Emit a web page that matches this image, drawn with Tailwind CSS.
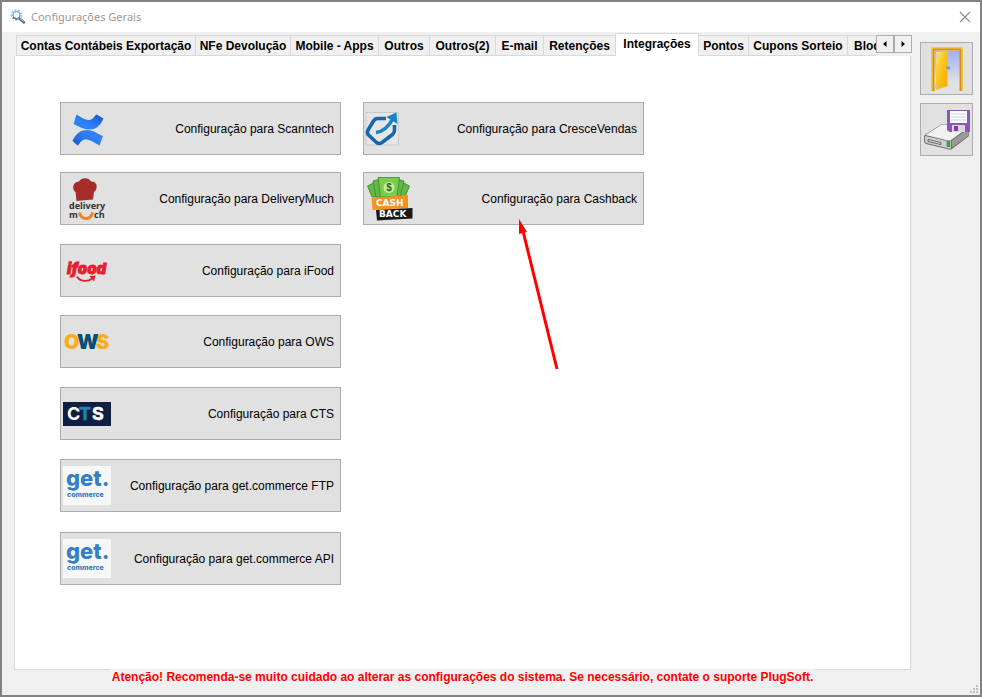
<!DOCTYPE html>
<html lang="pt-BR">
<head>
  <meta charset="UTF-8" />
  <meta name="viewport" content="width=device-width, initial-scale=1" />
  <title>Configurações Gerais</title>
  <script src="https://cdn.jsdelivr.net/npm/@tailwindcss/browser@4"></script>
</head>
<body class="min-h-screen flex flex-col bg-[#f0f0f0] border-2 border-[#828282] font-['Liberation_Sans',Arial,sans-serif] text-[12px] leading-4 text-black">

  <!-- Title bar -->
  <header class="flex items-center h-[30px] bg-white pl-2 pr-[7px]">
    <svg class="w-4 h-4 shrink-0" viewBox="0 0 16 16" fill="none">
      <circle cx="6.5" cy="6" r="4.5" stroke="#a9c6dc" stroke-width="2.6" stroke-dasharray="2 1.1" />
      <circle cx="6.5" cy="6" r="3.5" fill="#f3faff" stroke="#6f9cc0" stroke-width="1" />
      <path d="M3 8.500l4.500 2" stroke="#35618c" stroke-width="1.200" />
      <path d="M9.500 9.500l4.500 4" stroke="#44698f" stroke-width="2.400" stroke-linecap="round" />
      <path d="M10 9.500l3.500 3" stroke="#b9d3ea" stroke-width="1" />
    </svg>
    <h1 class="ml-[5px] flex-1 font-['Noto_Sans',sans-serif] text-[11px] text-[#999999]">Configurações Gerais</h1>
    <button aria-label="Fechar" class="w-4 h-4 flex items-center justify-center">
      <svg class="w-3 h-3" viewBox="0 0 12 12" stroke="#8c8c8c" stroke-width="1.100"><path d="M1 1l10 10M11 1L1 11" /></svg>
    </button>
  </header>

  <div class="flex flex-1 pl-3 pr-[7px]">
    <div class="flex-1 min-w-0 flex flex-col">
      <!-- Tabs -->
      <nav class="flex items-end h-6 pl-[2px] shrink-0">
        <div class="flex flex-1 min-w-0 items-end overflow-hidden font-bold whitespace-nowrap">
          <button class="shrink-0 w-[180px] h-[21px] border border-[#d9d9d9]">Contas Contábeis Exportação</button>
          <button class="shrink-0 w-[95px] h-[21px] border border-l-0 border-[#d9d9d9]">NFe Devolução</button>
          <button class="shrink-0 w-[88px] h-[21px] border border-l-0 border-[#d9d9d9]">Mobile - Apps</button>
          <button class="shrink-0 w-[51px] h-[21px] border border-l-0 border-[#d9d9d9]">Outros</button>
          <button class="shrink-0 w-[66px] h-[21px] border border-l-0 border-[#d9d9d9]">Outros(2)</button>
          <button class="shrink-0 w-12 h-[21px] border border-l-0 border-[#d9d9d9]">E-mail</button>
          <button class="shrink-0 w-[71px] h-[21px] border border-x-0 border-[#d9d9d9]">Retenções</button>
          <button class="shrink-0 w-[84px] h-[23px] pb-[2px] border-t border-x border-[#d9d9d9] bg-white">Integrações</button>
          <button class="shrink-0 w-[50px] h-[21px] border border-l-0 border-[#d9d9d9]">Pontos</button>
          <button class="shrink-0 w-[99px] h-[21px] border border-l-0 border-[#d9d9d9]">Cupons Sorteio</button>
          <button class="shrink-0 w-16 h-[21px] pl-[6px] text-left border border-x-0 border-[#d9d9d9]">Bloqueios</button>
        </div>
        <div class="-mr-px h-6 shrink-0 pt-[3px] flex items-start">
          <button aria-label="Abas anteriores" class="w-[18px] h-[18px] flex items-center justify-center border border-[#adadad] bg-[#f0f0f0]">
            <svg class="w-2 h-2" viewBox="0 0 8 8"><path d="M5.500 1v6L2 4z" /></svg>
          </button>
          <button aria-label="Próximas abas" class="w-[18px] h-[18px] flex items-center justify-center border border-[#adadad] bg-[#f0f0f0]">
            <svg class="w-2 h-2" viewBox="0 0 8 8"><path d="M2.500 1v6L6 4z" /></svg>
          </button>
        </div>
      </nav>

      <!-- Tab panel -->
      <main class="relative flex-1 bg-white border border-t-0 border-[#d9d9d9] pt-[46px] pl-[45px]">
        <div class="grid grid-flow-col items-start justify-start grid-rows-[70px_72px_71px_72px_72px_73px_53px] auto-cols-[281px] gap-x-[22px]">
          <button class="flex items-center justify-between h-[53px] pr-[6px] bg-[#e1e1e1] border border-[#adadad]">
            <svg class="w-[52px] h-[51px]" viewBox="0 0 52 51">
              <defs>
                <linearGradient id="blueTop" x1="1" y1="0" x2="0" y2="1"><stop offset="0" stop-color="#1457c9" /><stop offset=".6" stop-color="#2f82f6" /></linearGradient>
                <linearGradient id="blueBottom" x1="0" y1="1" x2="1" y2="0"><stop offset="0" stop-color="#1457c9" /><stop offset=".6" stop-color="#2f82f6" /></linearGradient>
              </defs>
              <path fill="url(#blueTop)" d="M15.500 11.500C20 14 26 19 31 16C33 15 34 12 35.500 11.500L42.500 15.500C39 23 35 26.500 29 26.500C22 26.500 17 23 12.500 21Z" />
              <path fill="url(#blueBottom)" d="M11.500 38C15 30 20 27 26 27C32 27 37 31 42 33L38.500 42.500C33 40 27 34.500 22 37C19 38.500 18 42 16.500 42.500Z" />
            </svg>
            <span>Configuração para Scanntech</span>
          </button>

          <button class="flex items-center justify-between h-[53px] pr-[6px] bg-[#e1e1e1] border border-[#adadad]">
            <svg class="w-[52px] h-[51px]" viewBox="0 0 52 51">
              <path fill="#a62b2b" d="M15.500 28L14.500 19C11 17 11 9 18 8.500C20 4 28 4 30 8.500C37 8 37 17 33 19L32 26.500Z" />
              <g font-family="Open Sans, sans-serif" font-size="9" font-weight="700" fill="#33312c">
                <text x="8" y="36">delivery</text>
                <text x="8" y="45">m</text>
                <text x="33" y="45">ch</text>
              </g>
              <path d="M18.500 39.500C20 47.500 30 47.500 31.500 39.500" fill="none" stroke="#f08228" stroke-width="3" />
            </svg>
            <span>Configuração para DeliveryMuch</span>
          </button>

          <button class="flex items-center justify-between h-[53px] pr-[6px] bg-[#e1e1e1] border border-[#adadad]">
            <svg class="w-[52px] h-[51px]" viewBox="0 0 52 51" fill="#e5202e">
              <text x="6" y="29" font-family="Inter, sans-serif" font-size="15" font-style="italic" font-weight="900" stroke="#e5202e" stroke-width=".8">ifood</text>
              <path d="M16 31.500C19 37 27 37 31 33.500" fill="none" stroke="#e5202e" stroke-width="1.800" />
              <path d="M28.500 31L34.500 30.500L33 36.500Z" />
            </svg>
            <span>Configuração para iFood</span>
          </button>

          <button class="flex items-center justify-between h-[53px] pr-[6px] bg-[#e1e1e1] border border-[#adadad]">
            <svg class="w-[52px] h-[51px]" viewBox="0 0 52 51" font-family="Inter, sans-serif" font-size="20" font-weight="900">
              <text x="3" y="33" fill="#fbad18">O</text>
              <text x="35" y="33" fill="#fbad18">S</text>
              <text x="16" y="33" fill="#05507a">W</text>
            </svg>
            <span>Configuração para OWS</span>
          </button>

          <button class="flex items-center justify-between h-[53px] pr-[6px] bg-[#e1e1e1] border border-[#adadad]">
            <svg class="w-[52px] h-[51px]" viewBox="0 0 52 51" font-family="Inter, sans-serif" font-size="18" font-weight="700">
              <path fill="#101f41" d="M2 14h48v24H2z" />
              <text x="18" y="32" fill="#1b86b5" stroke="#1b86b5" stroke-width=".5">T</text>
              <text x="6" y="32" fill="#fff">C</text>
              <text x="31" y="32" fill="#fff" stroke="#fff" stroke-width=".5">S</text>
            </svg>
            <span>Configuração para CTS</span>
          </button>

          <button class="flex items-center justify-between h-[53px] pr-[6px] bg-[#e1e1e1] border border-[#adadad]">
            <svg class="w-[52px] h-[51px]" viewBox="0 0 52 51" fill="#357fc2">
              <path fill="#f7f7f7" d="M2 6h48v39H2z" />
              <text x="5" y="26" font-family="Inter, sans-serif" font-size="22" font-weight="800">get.</text>
              <text x="6" y="37" font-family="Inter, sans-serif" font-size="7" font-weight="800" stroke="#f7f7f7" stroke-width="2" paint-order="stroke">commerce</text>
            </svg>
            <span>Configuração para get.commerce FTP</span>
          </button>

          <button class="flex items-center justify-between h-[53px] pr-[6px] bg-[#e1e1e1] border border-[#adadad]">
            <svg class="w-[52px] h-[51px]" viewBox="0 0 52 51" fill="#357fc2">
              <path fill="#f7f7f7" d="M2 6h48v39H2z" />
              <text x="5" y="26" font-family="Inter, sans-serif" font-size="22" font-weight="800">get.</text>
              <text x="6" y="37" font-family="Inter, sans-serif" font-size="7" font-weight="800" stroke="#f7f7f7" stroke-width="2" paint-order="stroke">commerce</text>
            </svg>
            <span>Configuração para get.commerce API</span>
          </button>

          <button class="flex items-center justify-between h-[53px] pr-[6px] bg-[#e1e1e1] border border-[#adadad]">
            <svg class="w-[52px] h-[51px]" viewBox="0 0 52 51" fill="none">
              <path fill="#e6e6e6" stroke="#c4c4c4" stroke-width=".8" d="M2 9.500h32.500v32.500H2z" />
              <path d="M22 15.500H13.500Q11 15.500 9.500 18L4 27Q2.500 30 4.500 32L12.500 39.500Q15 41.500 18 39.500L28.500 31.500Q30.500 30 30.500 27V22" stroke="#1667ae" stroke-width="3.600" />
              <path d="M12 29.500C20 28.500 25 23 29 15.500" stroke="#1583c4" stroke-width="3.600" />
              <path d="M22.500 14L32.500 9.500L33.500 21Z" fill="#1583c4" />
            </svg>
            <span>Configuração para CresceVendas</span>
          </button>

          <button class="flex items-center justify-between h-[53px] pr-[6px] bg-[#e1e1e1] border border-[#adadad]">
            <svg class="w-[52px] h-[51px]" viewBox="0 0 52 51">
              <g stroke="#37862b" stroke-width=".8">
                <path fill="#65b845" d="M3.500 13L15 7L20 24H8Z" />
                <path fill="#65b845" d="M34 7L45.500 13L41 24H29Z" />
                <path fill="#65b845" d="M9 8L20 5L24 24H12Z" />
                <path fill="#65b845" d="M29 5L40 8L36 24H25Z" />
                <path fill="#7bcb51" d="M14 4.500H35.500L33 24H16.500Z" />
              </g>
              <circle cx="25" cy="14.500" r="5.500" fill="#c6eba0" />
              <text x="25" y="18" text-anchor="middle" font-family="Liberation Sans, sans-serif" font-size="10" font-weight="700" fill="#1d6a24">$</text>
              <path fill="#f6931f" d="M7.500 25L44 22V35L8.500 37Z" />
              <path fill="#181818" d="M12 37L48.500 35V45.500L13 47.500Z" />
              <g font-family="DejaVu Sans, sans-serif" font-size="9" font-weight="700" fill="#fff">
                <text x="12" y="33">CASH</text>
                <text x="15" y="44">BACK</text>
              </g>
            </svg>
            <span>Configuração para Cashback</span>
          </button>
        </div>

        <!-- Arrow pointing at the Cashback button -->
        <svg class="absolute left-[503px] top-[163px] w-[42px] h-[152px] pointer-events-none" viewBox="0 0 42 152">
          <path d="M5 12L39 150" stroke="#ff0000" stroke-width="3" />
          <path d="M1 0L9 13L1 15Z" fill="#ff0000" />
        </svg>
      </main>
    </div>

    <!-- Side actions -->
    <aside class="shrink-0 flex flex-col gap-2 pt-[10px] pl-[9px]">
      <button aria-label="Sair" class="w-[53px] h-[53px] bg-[#e1e1e1] border border-[#adadad]">
        <svg class="w-full h-full" viewBox="0 0 51 51">
          <defs>
            <linearGradient id="sky" x1="0" y1="0" x2="0" y2="1"><stop offset="0" stop-color="#9fb0f4" /><stop offset=".8" stop-color="#e1e1e1" /></linearGradient>
            <linearGradient id="door" x1="0" y1="0" x2="1" y2="1"><stop offset="0" stop-color="#ffe08a" /><stop offset=".4" stop-color="#ffc91c" /><stop offset="1" stop-color="#f5a700" /></linearGradient>
          </defs>
          <path fill="url(#sky)" d="M14 8h25v39H14z" />
          <path d="M12 48V6H40V48" fill="none" stroke="#d98a24" stroke-width="3" />
          <path d="M11 48V5H41V48" fill="none" stroke="#ffd51f" stroke-width="1.200" />
          <path fill="url(#door)" d="M15 9L26.500 8V43L15 47Z" />
          <path d="M15 11v4M15 41v4" stroke="#b8c8e8" stroke-width="1.500" />
          <path d="M25 24.500h4" stroke="#6f8fca" stroke-width="1.500" />
          <circle cx="27.500" cy="25" r="1.800" fill="#6f9ade" />
        </svg>
      </button>
      <button aria-label="Salvar" class="w-[53px] h-[53px] bg-[#e1e1e1] border border-[#adadad]">
        <svg class="w-full h-full" viewBox="0 0 51 51">
          <path d="M3 33Q3 31 5 30L21 20H45L48 23V32L31 45Q29 46 26 45L5 40Q3 39 3 37Z" fill="#6f6f6f" />
          <path d="M4.500 31L21 20.500H44L47.500 23.500L30 36Q28 37 25 36Z" fill="#f1f1f1" />
          <path d="M4 32L26 37Q28 37.500 30 36.500V44Q28 45 26 44L5.500 39Q4 38.500 4 37Z" fill="#cfcfcf" />
          <path d="M7 35.500L20 38.500V40.500L7 37.500Z" fill="#e8e8e8" stroke="#555" stroke-width=".9" />
          <path d="M31 36.500L47.500 25V31.500L31 43.500Z" fill="#9b9b9b" />
          <path d="M26 37.500h2.800v5H26z" fill="#2fc52b" stroke="#1c5e1b" stroke-width=".6" />
          <path d="M26 6H49V28H28.500L26 26Z" fill="#8f55b5" />
          <path d="M29 7H46V19H29z" fill="#fff" />
          <path d="M30 10h15M30 13h15M30 16h15" stroke="#c9d3e2" stroke-width="1" />
          <path d="M31 21h13v7H31z" fill="#dcd3e6" />
          <path d="M33 22h4v5h-4z" fill="#7a3fa3" />
        </svg>
      </button>
    </aside>
  </div>

  <footer class="relative flex items-start h-[25px] shrink-0 pl-3 pr-[69px]">
    <div class="-mt-px flex-1 flex justify-center">
      <p class="px-[2px] bg-[#f0f0f0] font-bold text-[#ff0000] whitespace-nowrap">Atenção! Recomenda-se muito cuidado ao alterar as configurações do sistema. Se necessário, contate o suporte PlugSoft.</p>
    </div>
    <svg class="absolute right-0 bottom-0 w-3 h-3" viewBox="0 0 12 12" fill="#bfbfbf">
      <path d="M8 2h2v2H8zM5 5h2v2H5zM8 5h2v2H8zM2 8h2v2H2zM5 8h2v2H5zM8 8h2v2H8z" />
    </svg>
  </footer>
</body>
</html>
